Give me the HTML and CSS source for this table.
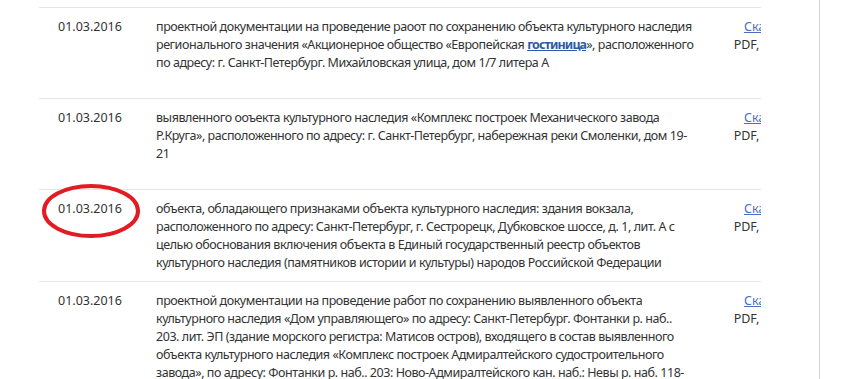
FILE: index.html
```html
<!DOCTYPE html>
<html lang="ru">
<head>
<meta charset="utf-8">
<link rel="stylesheet" href="styles.css">
</head>
<body>
<div class="page">
  <div class="table">
    <div class="row">
      <div class="date">01.03.2016</div>
      <div class="desc">проектной документации на проведение раоот по сохранению объекта культурного наследия регионального значения «Акционерное общество «Европейская <a class="hl" href="#">гостиница</a>», расположенного по адресу: г. Санкт-Петербург. Михайловская улица, дом 1/7 литера А</div>
      <div class="file"><div class="file-in"><a href="#">Скачать</a><br>PDF, 1.2 Мб</div></div>
    </div>
    <div class="row">
      <div class="date">01.03.2016</div>
      <div class="desc">выявленного ооъекта культурного наследия «Комплекс построек Механического завода Р.Круга», расположенного по адресу: г. Санкт-Петербург, набережная реки Смоленки, дом 19-21</div>
      <div class="file"><div class="file-in"><a href="#">Скачать</a><br>PDF, 1.2 Мб</div></div>
    </div>
    <div class="row">
      <div class="date marked">01.03.2016
        <svg class="circle" width="104" height="60" viewBox="0 0 104 60"><ellipse cx="52" cy="30" rx="47" ry="25" fill="none" stroke="#e31c24" stroke-width="4"/></svg>
      </div>
      <div class="desc">объекта, обладающего признаками объекта культурного наследия: здания вокзала, расположенного по адресу: Санкт-Петербург, г. Сестрорецк, Дубковское шоссе, д. 1, лит. А с целью обоснования включения объекта в Единый государственный реестр объектов культурного наследия (памятников истории и культуры) народов Российской Федерации</div>
      <div class="file"><div class="file-in"><a href="#">Скачать</a><br>PDF, 1.2 Мб</div></div>
    </div>
    <div class="row">
      <div class="date">01.03.2016</div>
      <div class="desc">проектной документации на проведение работ по сохранению выявленного объекта культурного наследия «Дом управляющего» по адресу: Санкт-Петербург. Фонтанки р. наб.. 203. лит. ЭП (здание морского регистра: Матисов остров), входящего в состав выявленного объекта культурного наследия «Комплекс построек Адмиралтейского судостроительного завода», по адресу: Фонтанки р. наб.. 203: Ново-Адмиралтейского кан. наб.: Невы р. наб. 118-120</div>
      <div class="file"><div class="file-in"><a href="#">Скачать</a><br>PDF, 1.2 Мб</div></div>
    </div>
  </div>
</div>
</body>
</html>
```
FILE: styles.css
```css
html, body {
  margin: 0;
  padding: 0;
  background: #fff;
  overflow: hidden;
}
.page {
  width: 820px;
  height: 379px;
  border-right: 1px solid #d4d4d4;
  box-sizing: border-box;
  padding: 7px 0 0 39px;
  overflow: hidden;
}
.table {
  width: 722px;
  overflow: hidden;
  font-family: "Noto Sans", "Open Sans", sans-serif;
  font-size: 12.5px;
  line-height: 18px;
  color: #333;
  letter-spacing: -0.45px;
}
.row {
  display: grid;
  grid-template-columns: 117px 572px 33px;
  border-top: 1px solid #e6e6e6;
  padding: 10px 0 9px;
  min-height: 71px;
}
.date {
  padding-left: 19px;
  position: relative;
  letter-spacing: 0;
}
.circle {
  position: absolute;
  left: 0;
  top: -19px;
}
.desc {
  padding-right: 32px;
}
.file {
  overflow: hidden;
  letter-spacing: 0;
}
.file-in {
  width: 80px;
  text-align: center;
  white-space: nowrap;
}
.file a {
  color: #4a6fc0;
  text-decoration: underline;
}
a.hl {
  color: #2a5ba8;
  font-weight: bold;
  letter-spacing: -0.9px;
  text-decoration: underline;
}
```
